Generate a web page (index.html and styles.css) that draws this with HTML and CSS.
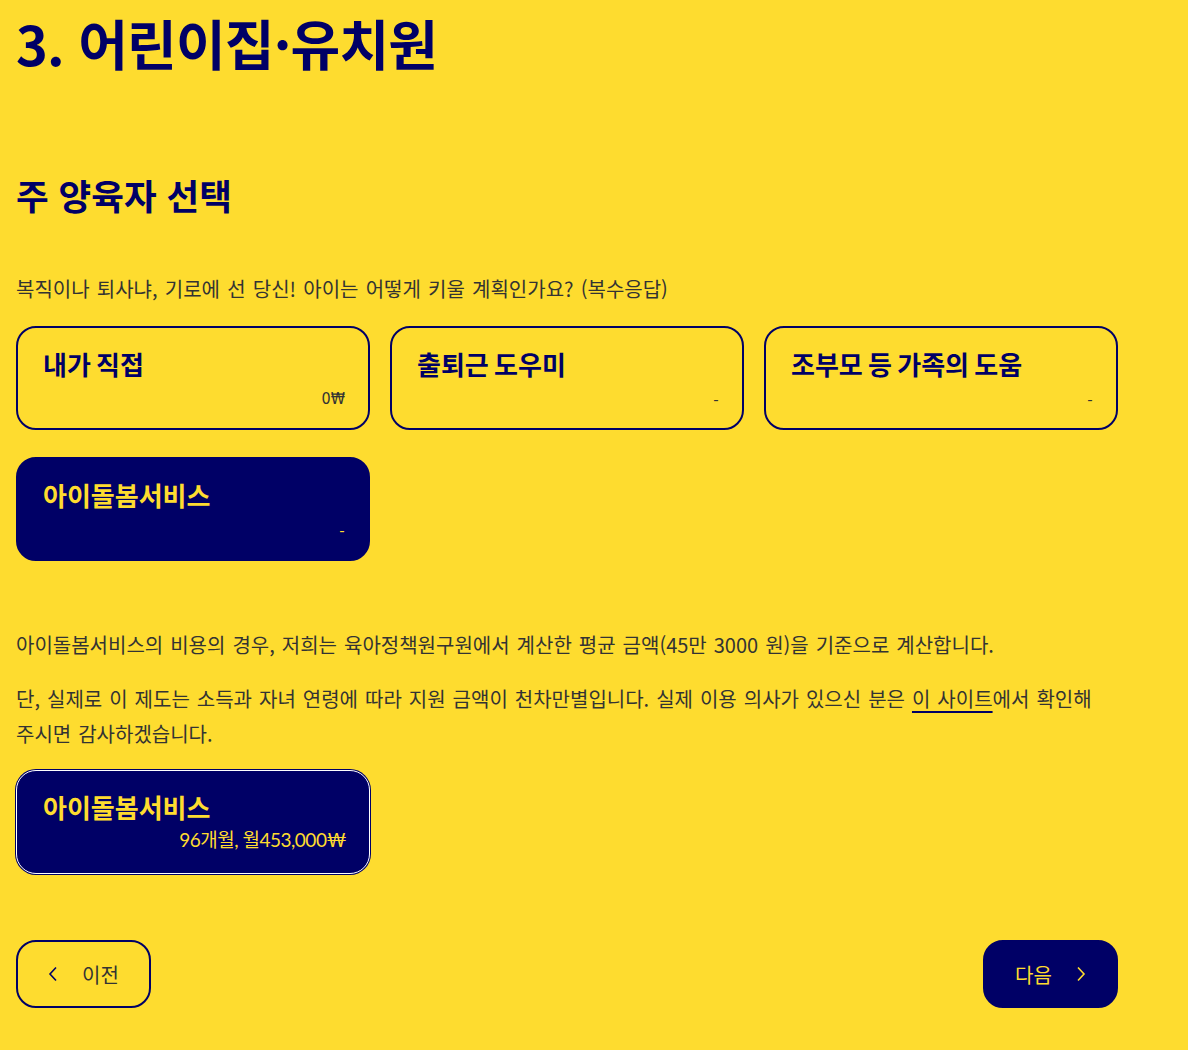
FILE: index.html
```html
<!DOCTYPE html>
<html lang="ko">
<head>
<meta charset="utf-8">
<link rel="stylesheet" href="styles.css">
</head>
<body>
<main class="page">
  <h1 class="title">3. 어린이집·유치원</h1>
  <h2 class="section-title">주 양육자 선택</h2>
  <p class="question">복직이나 퇴사냐, 기로에 선 당신! 아이는 어떻게 키울 계획인가요? (복수응답)</p>
  <div class="options">
    <div class="card">
      <div class="card-title">내가 직접</div>
      <div class="card-amount mono">0₩</div>
    </div>
    <div class="card">
      <div class="card-title">출퇴근 도우미</div>
      <div class="card-amount">-</div>
    </div>
    <div class="card">
      <div class="card-title">조부모 등 가족의 도움</div>
      <div class="card-amount">-</div>
    </div>
    <div class="card selected">
      <div class="card-title">아이돌봄서비스</div>
      <div class="card-amount">-</div>
    </div>
  </div>
  <p class="note first">아이돌봄서비스의 비용의 경우, 저희는 육아정책원구원에서 계산한 평균 금액(45만 3000 원)을 기준으로 계산합니다.</p>
  <p class="note">단, 실제로 이 제도는 소득과 자녀 연령에 따라 지원 금액이 천차만별입니다. 실제 이용 의사가 있으신 분은 <a class="link" href="#">이 사이트</a>에서 확인해 주시면 감사하겠습니다.</p>
  <div class="results">
    <div class="card result">
      <div class="card-title">아이돌봄서비스</div>
      <div class="card-amount">96개월, 월453,000₩</div>
    </div>
  </div>
  <nav class="nav">
    <button class="btn prev" type="button">
      <svg class="chev" width="10" height="16" viewBox="0 0 10 16"><path d="M8 1.5 L2 8 L8 14.5" fill="none" stroke="currentColor" stroke-width="1.6"/></svg>
      <span>이전</span>
    </button>
    <button class="btn next" type="button">
      <span>다음</span>
      <svg class="chev" width="10" height="16" viewBox="0 0 10 16"><path d="M2 1.5 L8 8 L2 14.5" fill="none" stroke="currentColor" stroke-width="1.6"/></svg>
    </button>
  </nav>
</main>
</body>
</html>
```

FILE: styles.css
```css
* { box-sizing: border-box; }
html, body {
  margin: 0;
  padding: 0;
  background: #fedc2f;
}
body {
  font-family: Lato, "Noto Sans CJK KR", sans-serif;
  color: #333;
}
.page {
  width: 1134px;
  padding: 0 16px;
}
.title {
  margin: 0;
  padding-top: 10px;
  font-family: "Noto Sans CJK KR", sans-serif;
  font-size: 54px;
  line-height: 66px;
  font-weight: 700;
  letter-spacing: -0.8px;
  color: #000066;
}
.section-title {
  margin: 95px 0 0;
  font-family: "Noto Sans CJK KR", sans-serif;
  font-size: 35.5px;
  line-height: 48px;
  font-weight: 700;
  color: #000066;
}
.question {
  margin: 56px 0 0;
  font-family: "Noto Sans CJK KR", sans-serif;
  font-size: 20px;
  line-height: 28px;
  word-spacing: 1.6px;
  color: #333;
}
.options {
  margin-top: 23px;
  display: grid;
  grid-template-columns: repeat(3, 354px);
  column-gap: 20px;
  row-gap: 27px;
}
.card {
  height: 104px;
  border: 2px solid #000066;
  border-radius: 20px;
  padding: 18px 23px 0 25px;
  display: flex;
  flex-direction: column;
}
.card-title {
  font-family: "Noto Sans CJK KR", sans-serif;
  font-size: 26px;
  line-height: 36px;
  font-weight: 700;
  word-spacing: -2px;
  color: #000066;
}
.card-amount {
  align-self: flex-end;
  margin-top: 5px;
  font-size: 16px;
  line-height: 24px;
  color: #333;
}
.card-amount.mono {
  font-family: "Liberation Sans Narrow", "DejaVu Sans Condensed", sans-serif;
}
.card.selected {
  background: #000066;
  border-color: #000066;
}
.card.selected .card-title,
.card.selected .card-amount {
  color: #fedc2f;
}
.note {
  margin: 0;
  font-family: "Noto Sans CJK KR", sans-serif;
  font-size: 20px;
  line-height: 35px;
  word-spacing: 1.4px;
  word-break: keep-all;
  color: #333;
  max-width: 1100px;
}
.note.first {
  margin-top: 66px;
}
.note + .note {
  margin-top: 19px;
}
.link {
  color: #333;
  text-decoration: underline;
  text-decoration-color: #000066;
  text-decoration-thickness: 2px;
  text-underline-offset: 4px;
}
.results {
  margin-top: 19px;
  display: grid;
  grid-template-columns: 354px;
}
.card.result {
  background: #000066;
  border: 1px solid #ffffff;
  box-shadow: 0 0 0 1px #000066;
  padding: 18px 23px 0 26px;
}
.card.result .card-title {
  color: #fedc2f;
}
.card.result .card-amount {
  margin-top: 3px;
  font-size: 19px;
  color: #fedc2f;
  letter-spacing: -0.5px;
}
.nav {
  margin-top: 66px;
  width: 1102px;
  display: flex;
  justify-content: space-between;
}
.btn {
  width: 135px;
  height: 68px;
  border-radius: 20px;
  border: 2px solid #000066;
  display: flex;
  align-items: center;
  justify-content: center;
  gap: 24px;
  font-family: "Noto Sans CJK KR", sans-serif;
  font-size: 20px;
  padding: 0;
  cursor: pointer;
}
.btn.prev {
  background: transparent;
  color: #333;
}
.btn.prev .chev { color: #000066; }
.btn.next {
  background: #000066;
  color: #fedc2f;
}
```
